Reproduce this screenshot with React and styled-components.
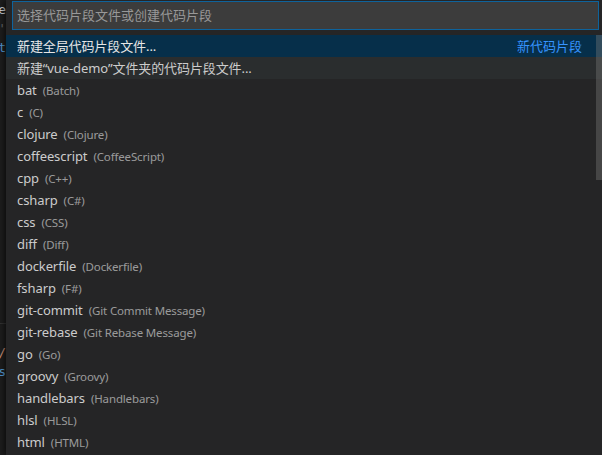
import React from 'react'
import styled, { createGlobalStyle } from 'styled-components'

const Global = createGlobalStyle`
  html, body {
    margin: 0;
    padding: 0;
    background: #1e1e1e;
    overflow: hidden;
  }
`

const Page = styled.div`
  display: flex;
  width: 602px;
  height: 455px;
  overflow: hidden;
  font-family: "Noto Sans", "Noto Sans CJK SC", sans-serif;
`

const Editor = styled.div`
  width: 6px;
  flex: none;
  overflow: hidden;
  background: #1e1e1e;
  font-family: "DejaVu Sans Mono", monospace;
  font-size: 13px;
  white-space: nowrap;
  display: flex;
  flex-direction: column;
  align-items: flex-end;
`

const CodeLine = styled.div`
  height: 19px;
  line-height: 19px;
  color: ${p => p.color || '#d4d4d4'};
  border-bottom: ${p => (p.rule ? '1px solid #333' : 'none')};
`

const Widget = styled.div`
  flex: 1;
  background: #252526;
  box-shadow: -2px 0 6px rgba(0, 0, 0, 0.6);
  display: flex;
  flex-direction: column;
  position: relative;
`

const InputRow = styled.div`
  padding: 1px 3px 0 6px;
`

const Input = styled.div`
  height: 27px;
  border: 1px solid #0e639c;
  background: #3c3c3c;
  color: #989898;
  font-size: 13px;
  line-height: 27px;
  padding-left: 4px;
`

const List = styled.div`
  margin-top: 5px;
  position: relative;
`

const Row = styled.div`
  height: 22px;
  line-height: 22px;
  padding: 0 20px 0 11px;
  display: flex;
  align-items: baseline;
  font-size: 13px;
  letter-spacing: -0.1px;
  white-space: nowrap;
  color: ${p => (p.selected ? '#e6e6e6' : '#cccccc')};
  background: ${p => (p.selected ? '#062f4a' : p.hover ? '#2a2d2e' : 'transparent')};
`

const Description = styled.span`
  font-size: 11.5px;
  margin-left: 6px;
  letter-spacing: -0.15px;
  opacity: 0.7;
`

const Meta = styled.span`
  margin-left: auto;
  color: #3794ff;
  letter-spacing: 0;
`

const Scrollbar = styled.div`
  position: absolute;
  right: 0;
  top: 0;
  width: 6px;
  height: 145px;
  background: rgba(121, 121, 121, 0.4);
`

const langs = [
  ['bat', 'Batch'],
  ['c', 'C'],
  ['clojure', 'Clojure'],
  ['coffeescript', 'CoffeeScript'],
  ['cpp', 'C++'],
  ['csharp', 'C#'],
  ['css', 'CSS'],
  ['diff', 'Diff'],
  ['dockerfile', 'Dockerfile'],
  ['fsharp', 'F#'],
  ['git-commit', 'Git Commit Message'],
  ['git-rebase', 'Git Rebase Message'],
  ['go', 'Go'],
  ['groovy', 'Groovy'],
  ['handlebars', 'Handlebars'],
  ['hlsl', 'HLSL'],
  ['html', 'HTML'],
]

export default () => (
  <Page>
    <Global />
    <Editor>
      <CodeLine>e</CodeLine>
      <CodeLine color="#6a6a6a">'</CodeLine>
      <CodeLine color="#569cd6">.t</CodeLine>
      {Array.from({ length: 14 }).map((_, i) => (
        <CodeLine key={i} rule={i === 13}>&nbsp;</CodeLine>
      ))}
      <CodeLine color="#6a6a6a">&nbsp;</CodeLine>
      <CodeLine color="#ce9178">:/</CodeLine>
      <CodeLine color="#569cd6">:s</CodeLine>
    </Editor>
    <Widget>
      <InputRow>
        <Input>选择代码片段文件或创建代码片段</Input>
      </InputRow>
      <List>
        <Row selected>
          新建全局代码片段文件...
          <Meta>新代码片段</Meta>
        </Row>
        <Row hover>新建“vue-demo”文件夹的代码片段文件...</Row>
        {langs.map(([id, name]) => (
          <Row key={id}>
            {id}
            <Description>({name})</Description>
          </Row>
        ))}
        <Scrollbar />
      </List>
    </Widget>
  </Page>
)
